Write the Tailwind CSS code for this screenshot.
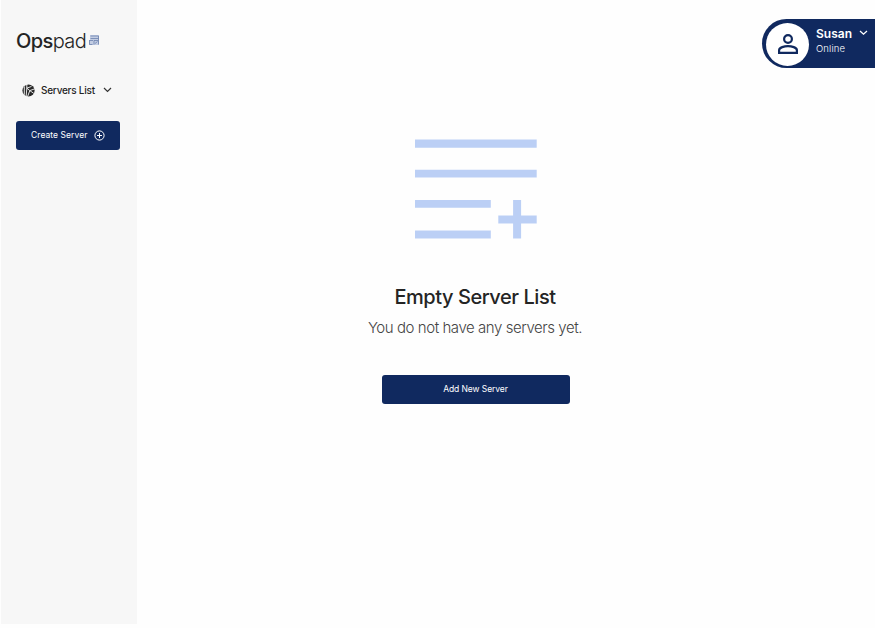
<!DOCTYPE html>
<html lang="en">
<head>
<meta charset="utf-8">
<title>Opspad</title>
<script src="https://cdn.jsdelivr.net/npm/@tailwindcss/browser@4"></script>
</head>
<body class="w-[875px] h-[628px] overflow-hidden bg-[#fefefe] font-['Inter',sans-serif] text-[#242424] flex whitespace-nowrap">
<aside class="ml-px w-[136px] h-[624px] shrink-0 bg-[#f7f7f7] pl-[15px]">
  <div class="pt-[27px] flex h-[55px] items-start">
    <div class="text-[20px] leading-7 tracking-[-0.6px]"><span class="font-medium">Ops</span><span class="font-light">pad</span></div>
    <svg class="ml-[3px] mt-[8px] shrink-0" width="10" height="10" viewBox="0 0 10 10"><path d="M1 0h9v10H0V5h1z" fill="#c3cde3"/><path d="M1.5 1h8M1.5 3.5h8M9.5 1v8.5M0 5.5h4M5 5.5h4M.5 5.5v4h3M5 9.5v-4M6 8.5l2.5-2" fill="none" stroke="#6b80ad" stroke-width=".8"/></svg>
  </div>
  <nav class="mt-[25px] ml-[6px] h-5 flex items-center">
    <svg width="13" height="13" viewBox="0 0 13 13" fill="none"><circle cx="6.5" cy="6.5" r="6.1" fill="#292929"/><path d="M4.8 0v4.2l3 2.4 5-1.8M4.8 4.2 9.5 2.4M7.8 6.6 5.5 12.8M7.8 6.6l4 2.8M2.3 2.3v8.5M4.8 4.2 4.2 12" stroke="#f7f7f7" stroke-width=".9"/></svg>
    <span class="ml-[6px] w-[62px] text-[10px] font-medium tracking-[-0.24px]">Servers List</span>
    <svg width="9" height="6" viewBox="0 0 9 6"><path d="m1 1 3.5 3.5L8 1" fill="none" stroke="#333" stroke-width="1.2"/></svg>
  </nav>
  <button class="mt-[21px] w-[104px] h-[29px] rounded-[3px] bg-[#10295f] text-white flex items-center pl-[15px]">
    <span class="w-[63px] text-left text-[8.5px] tracking-[0.06px]">Create Server</span>
    <svg width="11" height="11" viewBox="0 0 11 11" fill="none" stroke="white" stroke-width="1"><circle cx="5.5" cy="5.5" r="4.6"/><path d="M5.5 3v5M3 5.5h5"/></svg>
  </button>
</aside>
<main class="flex-1 flex flex-col">
  <header class="pt-[19px] flex justify-end">
    <div class="w-[113px] h-[49px] rounded-l-full bg-[#10295f] flex items-start text-white">
      <div class="mt-[4px] ml-[4px] size-[43px] shrink-0 rounded-full bg-white flex items-center justify-center">
        <svg class="-mt-[2px]" width="20" height="20" viewBox="0 0 20 20" fill="none" stroke="#10295f" stroke-width="2.2"><circle cx="10" cy="5" r="3.9"/><path d="M1.1 18.8v-2.6c0-2.8 5.4-4.1 8.9-4.1s8.9 1.3 8.9 4.1v2.6Z"/></svg>
      </div>
      <div class="ml-[7px] pt-[7px]">
        <div class="h-[15px] flex items-center"><span class="w-[43px] text-[12px] font-semibold">Susan</span><svg class="-mt-[2px]" width="9" height="6" viewBox="0 0 9 6"><path d="m1 1 3.5 3.2L8 1" fill="none" stroke="white" stroke-width="1.3"/></svg></div>
        <div class="mt-[1px] text-[9.5px] leading-[14px] font-light tracking-[0.15px]">Online</div>
      </div>
    </div>
  </header>
  <section class="w-[676px] flex flex-col items-center">
    <svg class="mt-[71px] ml-[1px]" width="122" height="100" viewBox="0 0 122 100" fill="#bbcff5"><path d="M0 .4h121.7v8.3H0zM0 30.7h121.7v7.8H0zM0 61h75.8v7.8H0zM0 91.5h75.8v8H0zM98.1 61h8v15.5h15.6v8h-15.6v15h-8v-15H83.3v-8h14.8z"/></svg>
    <h1 class="mt-[44px] text-[20px] leading-7 font-medium tracking-[-0.45px]">Empty Server List</h1>
    <p class="mt-[7px] text-[15px] leading-5 font-light text-[#454545] tracking-[-0.44px]">You do not have any servers yet.</p>
    <button class="mt-[37px] ml-[1px] w-[188px] h-[29px] rounded-[3px] bg-[#10295f] text-white text-[8.5px] tracking-[-0.08px]">Add New Server</button>
  </section>
</main>
</body>
</html>
